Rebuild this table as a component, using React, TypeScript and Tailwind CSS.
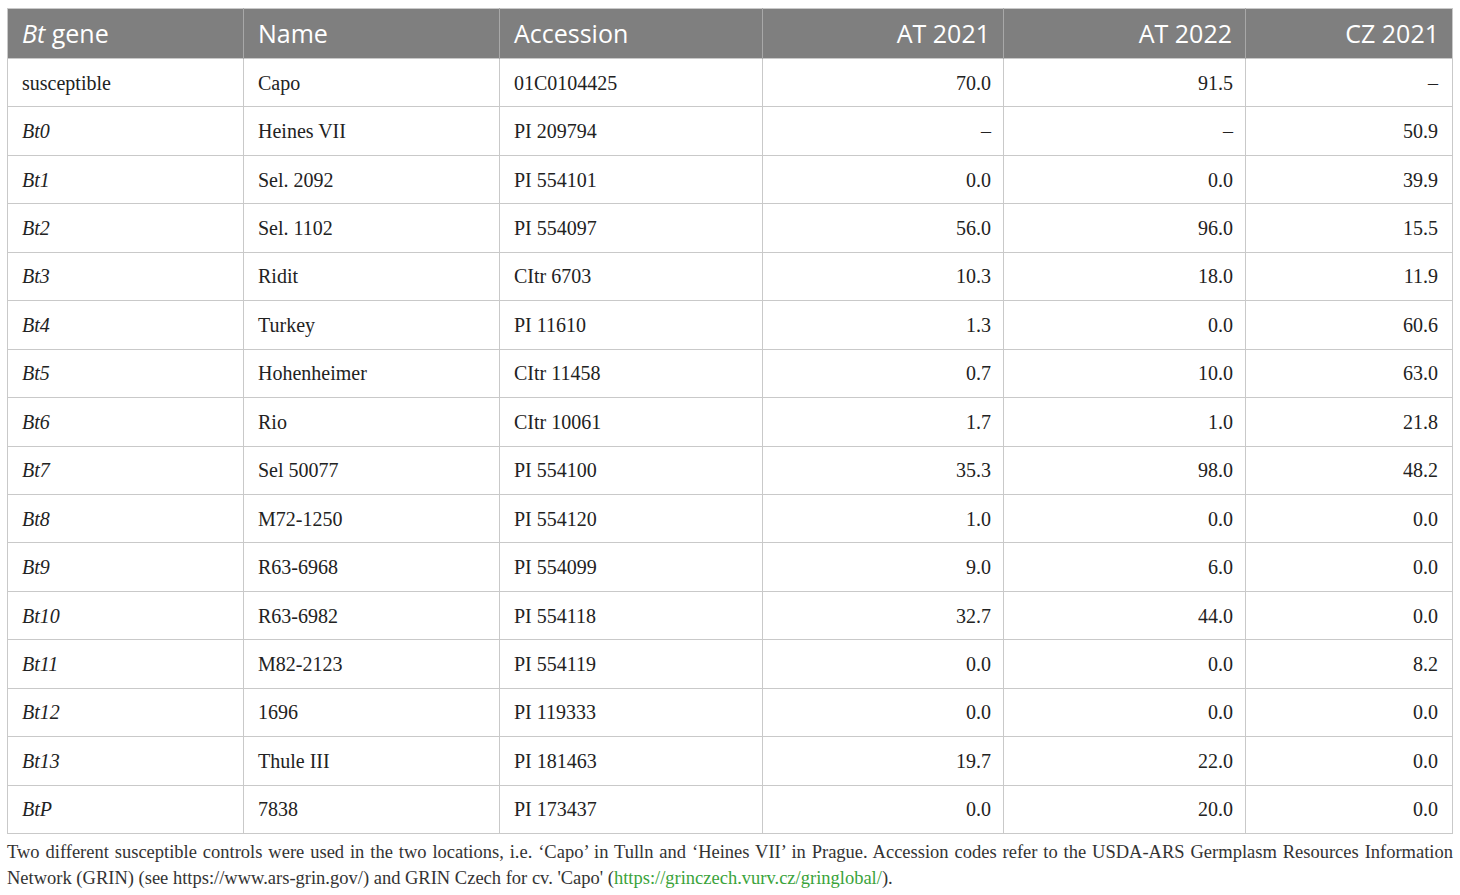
const ROWS: [string, string, string, string, string, string][] = [
  ["susceptible", "Capo", "01C0104425", "70.0", "91.5", "–"],
  ["Bt0", "Heines VII", "PI 209794", "–", "–", "50.9"],
  ["Bt1", "Sel. 2092", "PI 554101", "0.0", "0.0", "39.9"],
  ["Bt2", "Sel. 1102", "PI 554097", "56.0", "96.0", "15.5"],
  ["Bt3", "Ridit", "CItr 6703", "10.3", "18.0", "11.9"],
  ["Bt4", "Turkey", "PI 11610", "1.3", "0.0", "60.6"],
  ["Bt5", "Hohenheimer", "CItr 11458", "0.7", "10.0", "63.0"],
  ["Bt6", "Rio", "CItr 10061", "1.7", "1.0", "21.8"],
  ["Bt7", "Sel 50077", "PI 554100", "35.3", "98.0", "48.2"],
  ["Bt8", "M72-1250", "PI 554120", "1.0", "0.0", "0.0"],
  ["Bt9", "R63-6968", "PI 554099", "9.0", "6.0", "0.0"],
  ["Bt10", "R63-6982", "PI 554118", "32.7", "44.0", "0.0"],
  ["Bt11", "M82-2123", "PI 554119", "0.0", "0.0", "8.2"],
  ["Bt12", "1696", "PI 119333", "0.0", "0.0", "0.0"],
  ["Bt13", "Thule III", "PI 181463", "19.7", "22.0", "0.0"],
  ["BtP", "7838", "PI 173437", "0.0", "20.0", "0.0"],
];

const serif = "font-['Liberation_Serif',serif]";

export default function App() {
  return (
    <div className="w-[1460px] bg-white px-[7px] pt-[8px] text-[#222]">
      <table className="w-full table-fixed border-collapse border border-[#c9c9c9]">
        <colgroup>
          <col className="w-[236px]" />
          <col className="w-[256px]" />
          <col className="w-[263px]" />
          <col className="w-[241px]" />
          <col className="w-[242px]" />
          <col />
        </colgroup>
        <thead>
          <tr className="h-[50px] bg-[#7f7f7f] font-['Open_Sans',sans-serif] text-[25px] text-white">
            <th className="border-r border-[#a8a8a8] px-[14px] text-left font-normal">
              <i>Bt</i> gene
            </th>
            <th className="border-r border-[#a8a8a8] px-[14px] text-left font-normal">Name</th>
            <th className="border-r border-[#a8a8a8] px-[14px] text-left font-normal">Accession</th>
            <th className="border-r border-[#a8a8a8] px-[13px] text-right font-normal">AT 2021</th>
            <th className="border-r border-[#a8a8a8] px-[13px] text-right font-normal">AT 2022</th>
            <th className="px-[13px] text-right font-normal">CZ 2021</th>
          </tr>
        </thead>
        <tbody className={`${serif} text-[20px]`}>
          {ROWS.map((r) => (
            <tr key={r[0]} className="h-[48.45px] border-t border-[#c9c9c9]">
              <td className="border-r border-[#c9c9c9] px-[14px]">
                {r[0] === "susceptible" ? r[0] : <i>{r[0]}</i>}
              </td>
              <td className="border-r border-[#c9c9c9] px-[14px]">{r[1]}</td>
              <td className="border-r border-[#c9c9c9] px-[14px]">{r[2]}</td>
              <td className="border-r border-[#c9c9c9] px-[12px] text-right">{r[3]}</td>
              <td className="border-r border-[#c9c9c9] px-[12px] text-right">{r[4]}</td>
              <td className="px-[14px] text-right">{r[5]}</td>
            </tr>
          ))}
        </tbody>
      </table>
      <p className={`${serif} mt-[5px] text-justify text-[18.5px] leading-[26px] text-[#333]`}>
        Two different susceptible controls were used in the two locations, i.e. ‘Capo’ in Tulln and ‘Heines VII’ in
        Prague. Accession codes refer to the USDA-ARS Germplasm Resources Information Network (GRIN) (see
        https://www.ars-grin.gov/) and GRIN Czech for cv. 'Capo' (
        <span className="text-[#3aa33a]">https://grinczech.vurv.cz/gringlobal/</span>).
      </p>
    </div>
  );
}
